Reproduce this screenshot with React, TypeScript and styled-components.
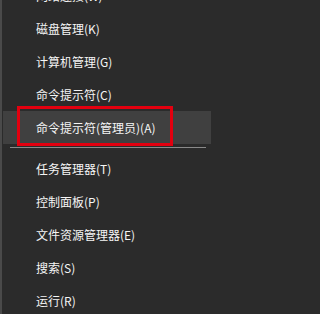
import React from 'react';
import styled, { createGlobalStyle } from 'styled-components';

const GlobalStyle = createGlobalStyle`
  html, body {
    margin: 0;
    padding: 0;
    background: #2b2b2b;
    overflow: hidden;
  }
`;

const Screen = styled.div`
  width: 211px;
  height: 314px;
  overflow: hidden;
  background: #2b2b2b;
  border-left: 2px solid #4a4a4a;
  box-sizing: border-box;
`;

const MenuList = styled.div`
  display: flex;
  flex-direction: column;
  margin-top: -21px;
  padding-left: 1px;
`;

const MenuItem = styled.div<{ $active?: boolean }>`
  position: relative;
  display: flex;
  align-items: center;
  height: 33px;
  padding-left: 33px;
  background: ${(p) => (p.$active ? '#404040' : 'transparent')};
  color: #f5f5f5;
  font-family: "Noto Sans CJK SC", "Microsoft YaHei", sans-serif;
  font-size: 12px;
  white-space: nowrap;
`;

const Annotation = styled.div`
  position: absolute;
  top: -5px;
  left: 14px;
  width: 156px;
  height: 40px;
  border: 3px solid #e3000f;
  box-sizing: border-box;
  pointer-events: none;
`;

const Separator = styled.div`
  height: 1px;
  margin: 3px 5px 4px 7px;
  background: #8a8a8a;
`;

type Entry = { label: string; active?: boolean } | 'sep';

const entries: Entry[] = [
  { label: '网络连接(W)' },
  { label: '磁盘管理(K)' },
  { label: '计算机管理(G)' },
  { label: '命令提示符(C)' },
  { label: '命令提示符(管理员)(A)', active: true },
  'sep',
  { label: '任务管理器(T)' },
  { label: '控制面板(P)' },
  { label: '文件资源管理器(E)' },
  { label: '搜索(S)' },
  { label: '运行(R)' },
];

const App: React.FC = () => {
  return (
    <>
      <GlobalStyle />
      <Screen>
        <MenuList>
          {entries.map((e, i) =>
            e === 'sep' ? (
              <Separator key={i} />
            ) : (
              <MenuItem key={i} $active={e.active}>
                {e.label}
                {e.active && <Annotation />}
              </MenuItem>
            )
          )}
        </MenuList>
      </Screen>
    </>
  );
};

export default App;
